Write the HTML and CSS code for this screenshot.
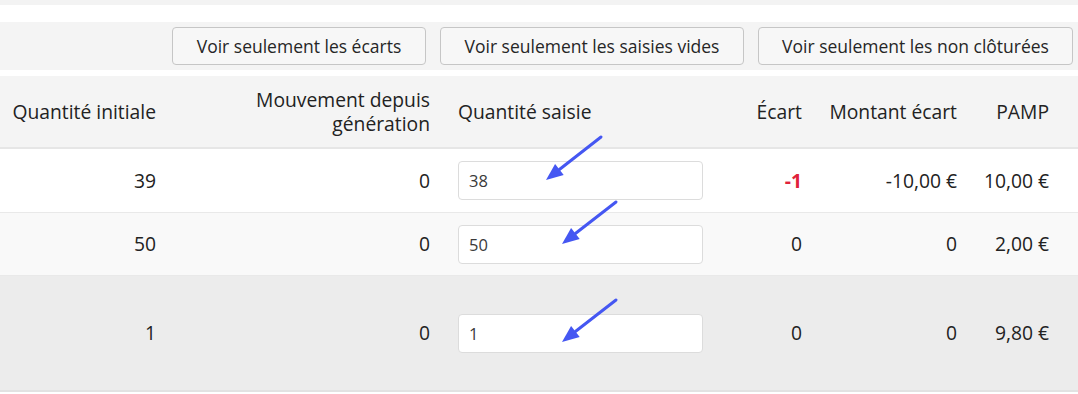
FILE: index.html
```html
<!DOCTYPE html>
<html lang="fr">
<head>
<meta charset="utf-8">
<link rel="stylesheet" href="styles.css">
</head>
<body>
<div class="page">
  <div class="top-strip"></div>
  <div class="toolbar">
    <button class="btn btn-ecarts">Voir seulement les écarts</button>
    <button class="btn btn-vides">Voir seulement les saisies vides</button>
    <button class="btn btn-nonclot">Voir seulement les non clôturées</button>
  </div>
  <table class="grid">
    <colgroup>
      <col class="c1"><col class="c2"><col class="c3"><col class="c4"><col class="c5"><col class="c6"><col class="c7">
    </colgroup>
    <thead>
      <tr>
        <th class="num">Quantité initiale</th>
        <th class="num">Mouvement depuis génération</th>
        <th class="saisie">Quantité saisie</th>
        <th class="num">Écart</th>
        <th class="num">Montant écart</th>
        <th class="num">PAMP</th>
        <th></th>
      </tr>
    </thead>
    <tbody>
      <tr class="r1">
        <td class="num">39</td>
        <td class="num">0</td>
        <td class="saisie"><input class="qty" type="text" value="38"></td>
        <td class="num neg">-1</td>
        <td class="num">-10,00 €</td>
        <td class="num">10,00 €</td>
        <td></td>
      </tr>
      <tr class="r2">
        <td class="num">50</td>
        <td class="num">0</td>
        <td class="saisie"><input class="qty" type="text" value="50"></td>
        <td class="num">0</td>
        <td class="num">0</td>
        <td class="num">2,00 €</td>
        <td></td>
      </tr>
      <tr class="r3">
        <td class="num">1</td>
        <td class="num">0</td>
        <td class="saisie"><input class="qty" type="text" value="1"></td>
        <td class="num">0</td>
        <td class="num">0</td>
        <td class="num">9,80 €</td>
        <td></td>
      </tr>
    </tbody>
  </table>
  <svg class="arrows" width="1078" height="394" viewBox="0 0 1078 394" xmlns="http://www.w3.org/2000/svg">
    <g stroke="#4557f2" stroke-width="3" stroke-linecap="round" fill="#4557f2">
      <line x1="601" y1="137" x2="559.4" y2="169.5"/>
      <polygon stroke="none" points="546,180 563.7,175 555.1,164"/>
      <line x1="616" y1="202" x2="575.4" y2="233.5"/>
      <polygon stroke="none" points="562,244 579.7,239 571.1,228"/>
      <line x1="616" y1="300" x2="575.4" y2="331.5"/>
      <polygon stroke="none" points="562,342 579.7,337 571.1,326"/>
    </g>
  </svg>
</div>
</body>
</html>
```

FILE: styles.css
```css
html, body {
  margin: 0;
  padding: 0;
  background: #ffffff;
}

.page {
  position: relative;
  width: 1078px;
  height: 394px;
  overflow: hidden;
  font-family: "Open Sans", "Noto Sans", sans-serif;
  font-size: 19.3px;
  color: #222222;
}

.top-strip {
  height: 5px;
  background: #f3f3f3;
  margin-bottom: 17px;
}

.toolbar {
  height: 48px;
  background: #f4f4f4;
  display: flex;
  justify-content: flex-end;
  align-items: center;
  gap: 14px;
  padding-right: 5px;
  margin-bottom: 6px;
}

.btn {
  height: 38px;
  padding: 0;
  border: 1px solid #c6c6c6;
  border-radius: 4px;
  background: #f7f7f7;
  font-family: inherit;
  font-size: 17.5px;
  color: #262626;
}

.btn-ecarts { width: 254px; }
.btn-vides { width: 304px; }
.btn-nonclot { width: 315px; }

.grid {
  width: 1078px;
  border-collapse: collapse;
  table-layout: fixed;
}

.c1 { width: 168px; }
.c2 { width: 274px; }
.c3 { width: 273px; }
.c4 { width: 99px; }
.c5 { width: 155px; }
.c6 { width: 92px; }
.c7 { width: 17px; }

.grid th,
.grid td {
  padding: 0 12px;
  line-height: 24px;
}

.grid th {
  font-weight: normal;
  background: #f4f4f4;
  height: 71px;
  border-bottom: 2px solid #e6e6e6;
}

.grid .num { text-align: right; }
.grid .saisie { text-align: left; padding-left: 16px; }

.grid td { border-bottom: 1px solid #e9e9e9; }

.r1 td { background: #ffffff; height: 63px; }
.r2 td { background: #f9f9f9; height: 62px; }
.r3 td { background: #ececec; height: 114px; border-bottom: 2px solid #e2e2e2; }

.neg {
  color: #e0223a;
  font-weight: 700;
}

.qty {
  box-sizing: border-box;
  width: 245px;
  height: 39px;
  border: 1px solid #dcdcdc;
  border-radius: 4px;
  background: #ffffff;
  padding: 0 10px;
  font-family: inherit;
  font-size: 16.5px;
  color: #3a3a3a;
  display: block;
}

.arrows {
  position: absolute;
  left: 0;
  top: 0;
  pointer-events: none;
}
```
